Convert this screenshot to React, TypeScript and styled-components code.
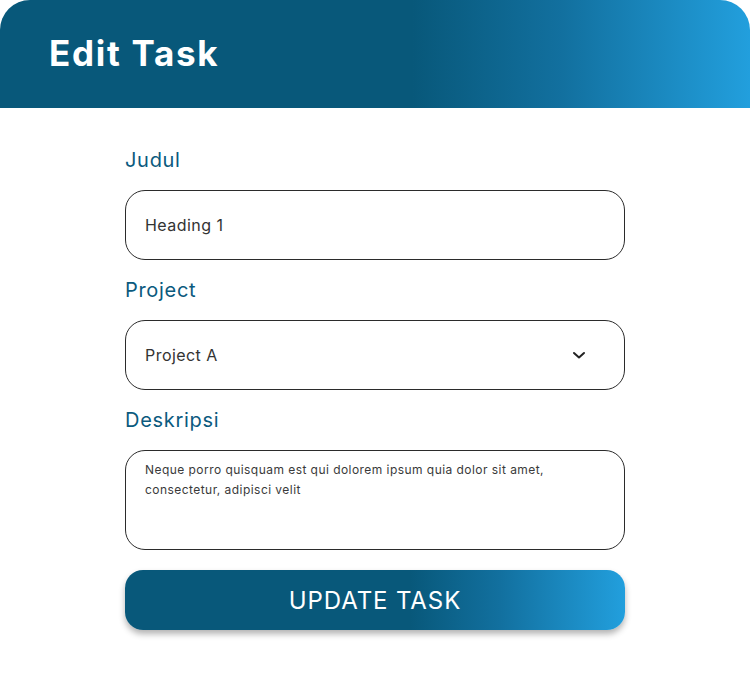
import React from "react";
import styled, { createGlobalStyle } from "styled-components";

const Global = createGlobalStyle`
  html, body { margin: 0; padding: 0; background: #ffffff; }
  body { font-family: Inter, "Open Sans", sans-serif; }
  * { box-sizing: border-box; }
`;

const Card = styled.div`
  width: 750px;
  min-height: 675px;
  background: #ffffff;
`;

const Header = styled.header`
  height: 108px;
  border-radius: 30px 30px 0 0;
  background: linear-gradient(90deg, #08587a 0%, #08587a 55%, #12709f 75%, #229fdd 100%);
  display: flex;
  align-items: center;
  padding: 0 0 2px 49px;
`;

const Title = styled.h1`
  margin: 0;
  color: #ffffff;
  font-family: Inter, "Open Sans", sans-serif;
  font-weight: 700;
  font-size: 35px;
  letter-spacing: 1.7px;
`;

const Form = styled.form`
  width: 500px;
  margin: 0 auto;
  padding-top: 40px;
  display: flex;
  flex-direction: column;
`;

const Label = styled.label`
  display: block;
  height: 24px;
  line-height: 24px;
  font-size: 20px;
  color: #0b5a7e;
  margin-bottom: 18px;
  letter-spacing: 0.7px;
`;

const Field = styled.div<{ $h: number }>`
  height: ${(p) => p.$h}px;
  border: 1px solid #2b2b2b;
  border-radius: 20px;
  margin-bottom: 18px;
  display: flex;
  align-items: center;
  padding: 0 38px 0 19px;
`;

const TextInput = styled.input`
  border: none;
  outline: none;
  background: transparent;
  width: 100%;
  font-family: inherit;
  font-size: 16px;
  color: #333333;
  letter-spacing: 0.45px;
  padding: 0;
`;

const SelectText = styled.span`
  flex: 1;
  font-size: 16px;
  color: #333333;
  letter-spacing: 0.45px;
`;

const AreaField = styled.div`
  height: 100px;
  border: 1px solid #2b2b2b;
  border-radius: 20px;
  margin-bottom: 20px;
  padding: 9px 20px 0 19px;
`;

const TextArea = styled.textarea`
  border: none;
  outline: none;
  resize: none;
  width: 100%;
  height: 80px;
  padding: 0;
  font-family: inherit;
  font-size: 12px;
  line-height: 20px;
  color: #3a3a3a;
  letter-spacing: 0.45px;
  overflow: hidden;
`;

const Button = styled.button`
  height: 60px;
  border: none;
  border-radius: 18px;
  background: linear-gradient(90deg, #08587a 0%, #08587a 57%, #12709f 75%, #229fdd 100%);
  color: #ffffff;
  font-family: inherit;
  font-size: 24px;
  font-weight: 400;
  letter-spacing: 0.9px;
  box-shadow: 0 4px 6px rgba(0, 0, 0, 0.3);
  cursor: pointer;
`;

const Chevron = () => (
  <svg width="14" height="10" viewBox="0 0 14 10" fill="none">
    <path d="M2 3 L7 7.5 L12 3" stroke="#222" strokeWidth="2" strokeLinecap="round" strokeLinejoin="round" />
  </svg>
);

export default function App() {
  return (
    <Card>
      <Global />
      <Header>
        <Title>Edit Task</Title>
      </Header>
      <Form onSubmit={(e) => e.preventDefault()}>
        <Label>Judul</Label>
        <Field $h={70}>
          <TextInput defaultValue="Heading 1" />
        </Field>
        <Label>Project</Label>
        <Field $h={70}>
          <SelectText>Project A</SelectText>
          <Chevron />
        </Field>
        <Label>Deskripsi</Label>
        <AreaField>
          <TextArea defaultValue="Neque porro quisquam est qui dolorem ipsum quia dolor sit amet, consectetur, adipisci velit" />
        </AreaField>
        <Button type="submit">UPDATE TASK</Button>
      </Form>
    </Card>
  );
}
